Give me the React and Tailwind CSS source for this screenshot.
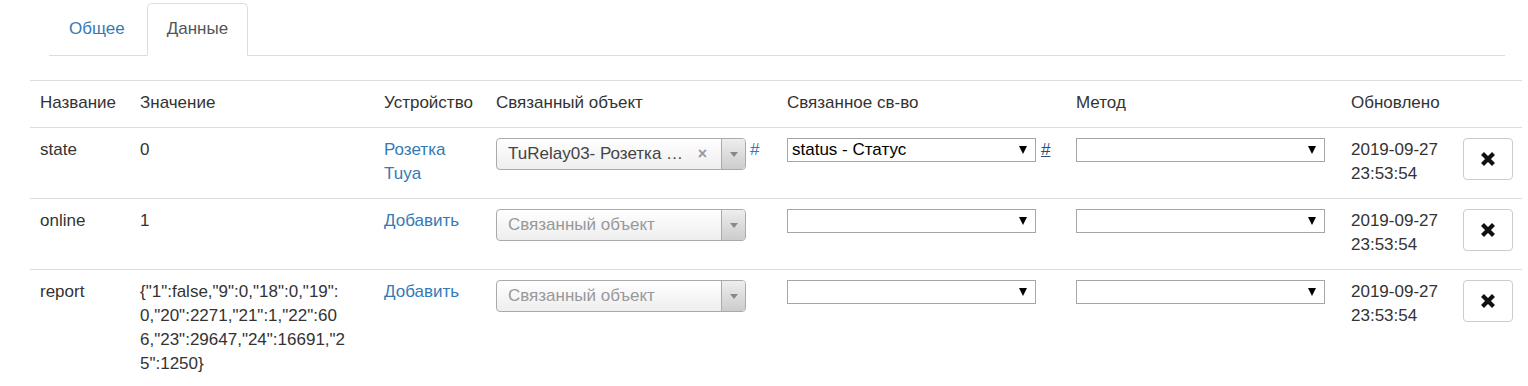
import React from 'react';

const font = { fontFamily: '"Liberation Sans", Arial, sans-serif' };

const RemoveIcon = () => (
  <svg width="16" height="16" viewBox="0 0 16 16">
    <path d="M2.5 2.5 L13.5 13.5 M13.5 2.5 L2.5 13.5" stroke="#111" strokeWidth="4.2" strokeLinecap="butt" />
  </svg>
);

const Select2 = ({ value }) => (
  <div className="flex h-[32px] w-[250px] shrink-0 items-stretch overflow-hidden rounded-[4px] border border-[#aaa] bg-gradient-to-b from-white to-[#eee]">
    <div className="flex min-w-0 flex-1 items-center pl-[11px] pr-2">
      {value ? (
        <>
          <span className="flex-1 whitespace-nowrap text-[#444]">{value}</span>
          <span className="ml-2 mr-[6px] text-[16px] font-bold text-[#999]">×</span>
        </>
      ) : (
        <span className="whitespace-nowrap text-[#999]">Связанный объект</span>
      )}
    </div>
    <div className="flex w-[24px] items-center justify-center border-l border-[#aaa] bg-gradient-to-b from-[#eee] to-[#ccc]">
      <span className="h-0 w-0 border-x-[4px] border-t-[5px] border-x-transparent border-t-[#888]" />
    </div>
  </div>
);

const NativeSelect = ({ value }) => (
  <div className="flex h-[24px] w-[249px] shrink-0 items-center justify-between border border-[#a6a6a6] bg-white pl-[4px] pr-[8px] text-black">
    <span className="whitespace-nowrap">{value}</span>
    <span className="h-0 w-0 border-x-[4px] border-t-[8px] border-x-transparent border-t-black" />
  </div>
);

const rows = [
  {
    name: 'state',
    value: ['0'],
    device: 'Розетка Tuya',
    object: 'TuRelay03- Розетка …',
    prop: 'status - Статус',
  },
  { name: 'online', value: ['1'], device: null, object: null, prop: '' },
  {
    name: 'report',
    value: ['{"1":false,"9":0,"18":0,"19":', '0,"20":2271,"21":1,"22":60', '6,"23":29647,"24":16691,"2', '5":1250}'],
    device: null,
    object: null,
    prop: '',
  },
];

const headers = ['Название', 'Значение', 'Устройство', 'Связанный объект', 'Связанное св-во', 'Метод', 'Обновлено', ''];
const widths = ['w-[100px]', 'w-[244px]', 'w-[112px]', 'w-[291px]', 'w-[289px]', 'w-[275px]', 'w-[112px]', 'w-[69px]'];

export default function App() {
  return (
    <div className="min-h-screen bg-white text-[17px] leading-[24px] text-[#333]" style={font}>
      <ul className="ml-[49px] mr-[23px] flex border-b border-[#ddd] pt-[3px]">
        <li className="-mb-px mr-[2px]">
          <a className="block rounded-t-[5px] border border-transparent px-[19px] pb-[14px] pt-[13px] text-[#337ab7]">Общее</a>
        </li>
        <li className="-mb-px">
          <a className="block rounded-t-[5px] border border-[#ddd] border-b-white bg-white px-[19px] pb-[14px] pt-[13px] text-[#555]">Данные</a>
        </li>
      </ul>

      <div className="ml-[30px] mt-[24px]">
        <table className="w-[1492px] table-fixed border-separate border-spacing-0">
          <colgroup>
            {widths.map((w, i) => (
              <col key={i} className={w} />
            ))}
          </colgroup>
          <thead>
            <tr>
              {headers.map((h, i) => (
                <th key={i} className="border-t border-[#ddd] px-[10px] pb-[12px] pt-[10px] text-left align-top font-normal">
                  {h}
                </th>
              ))}
            </tr>
          </thead>
          <tbody>
            {rows.map((r) => (
              <tr key={r.name}>
                <td className="border-t border-[#ddd] px-[10px] pb-[12px] pt-[10px] align-top">{r.name}</td>
                <td className="border-t border-[#ddd] px-[10px] pb-[12px] pt-[10px] align-top">
                  {r.value.map((line, i) => (
                    <span key={i} className="block whitespace-nowrap">{line}</span>
                  ))}
                </td>
                <td className="border-t border-[#ddd] px-[10px] pb-[12px] pt-[10px] align-top text-[#337ab7]">
                  {r.device || 'Добавить'}
                </td>
                <td className="border-t border-[#ddd] px-[10px] pb-[12px] pt-[10px] align-top">
                  <div className="flex items-start gap-[4px]">
                    <Select2 value={r.object} />
                    {r.object && <a className="text-[#337ab7]">#</a>}
                  </div>
                </td>
                <td className="border-t border-[#ddd] px-[10px] pb-[12px] pt-[10px] align-top">
                  <div className="flex items-start gap-[5px]">
                    <NativeSelect value={r.prop} />
                    {r.prop && <a className="text-[#23527c] underline">#</a>}
                  </div>
                </td>
                <td className="border-t border-[#ddd] px-[10px] pb-[12px] pt-[10px] align-top">
                  <NativeSelect value="" />
                </td>
                <td className="border-t border-[#ddd] px-[10px] pb-[12px] pt-[10px] align-top">2019-09-27 23:53:54</td>
                <td className="border-t border-[#ddd] px-[10px] pb-[12px] pt-[10px] align-top">
                  <button className="flex h-[42px] w-[50px] items-center justify-center rounded-[4px] border border-[#ccc] bg-white">
                    <RemoveIcon />
                  </button>
                </td>
              </tr>
            ))}
          </tbody>
        </table>
      </div>
    </div>
  );
}
